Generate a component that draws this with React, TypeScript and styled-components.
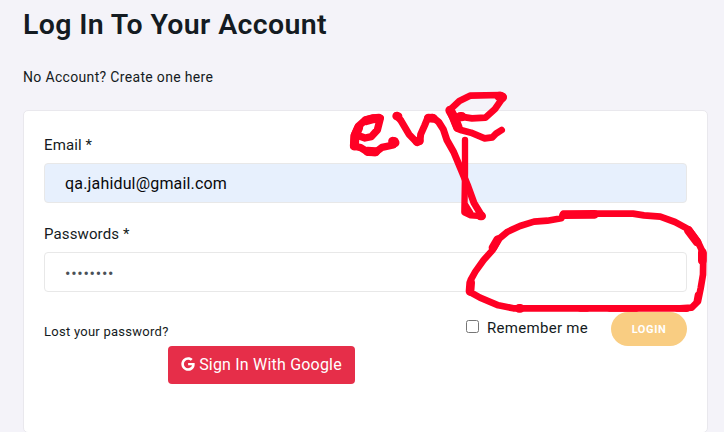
import React from 'react';
import styled, { createGlobalStyle } from 'styled-components';
import { FaGoogle } from 'react-icons/fa';

const GlobalStyle = createGlobalStyle`
  * { box-sizing: border-box; }
  html, body { margin: 0; background: #f4f3f9; overflow: hidden; }
  body, input, button { font-family: Roboto, sans-serif; color: #141b22; }
`;

const Page = styled.main`
  position: relative;
  height: 432px;
  padding: 0 16px 0 23px;
  overflow: hidden;
`;

const Title = styled.h1`
  margin: 0;
  height: 50px;
  font-size: 28.5px;
  line-height: 50px;
  font-weight: 600;
  letter-spacing: 0.35px;
  white-space: nowrap;
`;

const Signup = styled.p`
  margin: 17px 0 22px;
  font-size: 14px;
  line-height: 21px;
  letter-spacing: 0.33px;
`;

const Card = styled.form`
  height: 323px;
  padding: 23px 20px 0;
  background: #fff;
  border: 1px solid #e9e8ed;
  border-radius: 5px;
`;

const Field = styled.label`
  display: flex;
  flex-direction: column;
  gap: 6px;
  height: 89px;
  font-size: 15px;
  line-height: 23px;
  letter-spacing: 0.12px;
`;

const Input = styled.input<{ $filled?: boolean; $spacing?: number }>`
  width: 100%;
  height: 40px;
  padding: ${p => (p.$filled ? '0 20px' : '2px 20px 0')};
  border: 1px solid #e8e8e8;
  border-radius: 4px;
  outline: none;
  background: ${p => (p.$filled ? '#e7f0fd' : '#fff')};
  color: ${p => (p.$filled ? '#08090b' : '#495057')};
  font-size: 16px;
  letter-spacing: ${p => p.$spacing ?? 0}px;
`;

const Actions = styled.div`
  display: flex;
  align-items: center;
  height: 34px;
`;

const LostLink = styled.span`
  flex: 1;
  padding-top: 5px;
  font-size: 13px;
  letter-spacing: 0.26px;
`;

const Remember = styled.label`
  display: flex;
  align-items: center;
  gap: 8px;
  margin-right: 23px;
  padding-bottom: 2px;
  font-size: 15px;
  letter-spacing: 0.29px;
`;

const Checkbox = styled.input`
  width: 13px;
  height: 13px;
  margin: 0 0 3px;
`;

const LoginButton = styled.button`
  width: 76px;
  height: 34px;
  padding: 0;
  border: 0;
  border-radius: 17px;
  background: #f9cd82;
  color: #fff;
  font-size: 11px;
  font-weight: 700;
  letter-spacing: 0.6px;
`;

const GoogleButton = styled.button`
  display: flex;
  align-items: center;
  justify-content: center;
  gap: 4px;
  width: 187px;
  height: 38px;
  margin-left: 124px;
  padding: 0 0 2px;
  border: 0;
  border-radius: 4px;
  background: #e62e49;
  color: #fff;
  font-size: 16px;
  letter-spacing: 0.2px;
  white-space: nowrap;
`;

const Ink = styled.svg`
  position: absolute;
  inset: 0;
  pointer-events: none;
`;

const Annotation = () => (
  <Ink width="724" height="432" viewBox="0 0 724 432" fill="none" stroke="#ff0024" strokeLinecap="round" strokeLinejoin="round">
    <g transform="translate(340 80) scale(.33333)">
      <path strokeWidth="22" d="M58 168L75 174L94 170L112 150L121 115L100 114L76 120L55 139L43 165L41 198L62 203L85 217L105 218L126 202L160 195L164 182" />
      <path strokeWidth="27" d="M78 122L100 116L117 115M56 143L45 168L43 198M83 214L107 215M158 184L165 188" />
      <path strokeWidth="21" d="M170 107L183 122L207 163L231 188L240 183L242 163L254 136L263 114L278 112L296 126L310 148L321 181L341 216L367 278L384 319L402 369L425 407" />
      <path strokeWidth="26" d="M170 108L174 109M230 184L238 183M265 114L280 115M421 408L425 408" />
      <path strokeWidth="19" d="M375 180L375 280L373 397L392 406L423 408M376 375L391 399" />
      <path strokeWidth="20" d="M362 110L396 115L436 113L465 87L490 51L483 45L390 47L358 63L328 91L350 145L365 151L393 158L434 175L457 172L468 161L485 150" />
      <path strokeWidth="28" d="M361 110L365 110M330 91L343 114L354 142M477 49L487 52" />
    </g>
    <g transform="translate(450 200) scale(.33333)">
      <path strokeWidth="20" d="M340 43L334 55L292 62L252 65L210 78L173 95L145 118L128 150L101 180L76 215L62 240L60 276L90 293L145 316L190 325L400 325L690 325L725 323L744 304L752 265L759 224L760 160L744 126L716 88L675 66L631 50L582 46L549 41L440 41" />
      <path strokeWidth="26" d="M341 44L434 43M143 119L129 143M62 248L60 274M715 91L741 126M757 157L757 182M207 325L211 325" />
      <path strokeWidth="20" d="M390 325H412M478 325H560M682 325L710 326M744 285L741 302" />
    </g>
  </Ink>
);

export default function App() {
  return (
    <>
      <GlobalStyle />
      <Page>
        <Title>Log In To Your Account</Title>
        <Signup>No Account? Create one here</Signup>
        <Card>
          <Field>
            Email *
            <Input $filled $spacing={0.17} type="email" defaultValue="qa.jahidul@gmail.com" />
          </Field>
          <Field>
            Passwords *
            <Input $spacing={0.75} type="password" defaultValue="password" />
          </Field>
          <Actions>
            <LostLink>Lost your password?</LostLink>
            <Remember><Checkbox type="checkbox" />Remember me</Remember>
            <LoginButton type="button">LOGIN</LoginButton>
          </Actions>
          <GoogleButton type="button"><FaGoogle size={14} />Sign In With Google</GoogleButton>
        </Card>
        <Annotation />
      </Page>
    </>
  );
}
